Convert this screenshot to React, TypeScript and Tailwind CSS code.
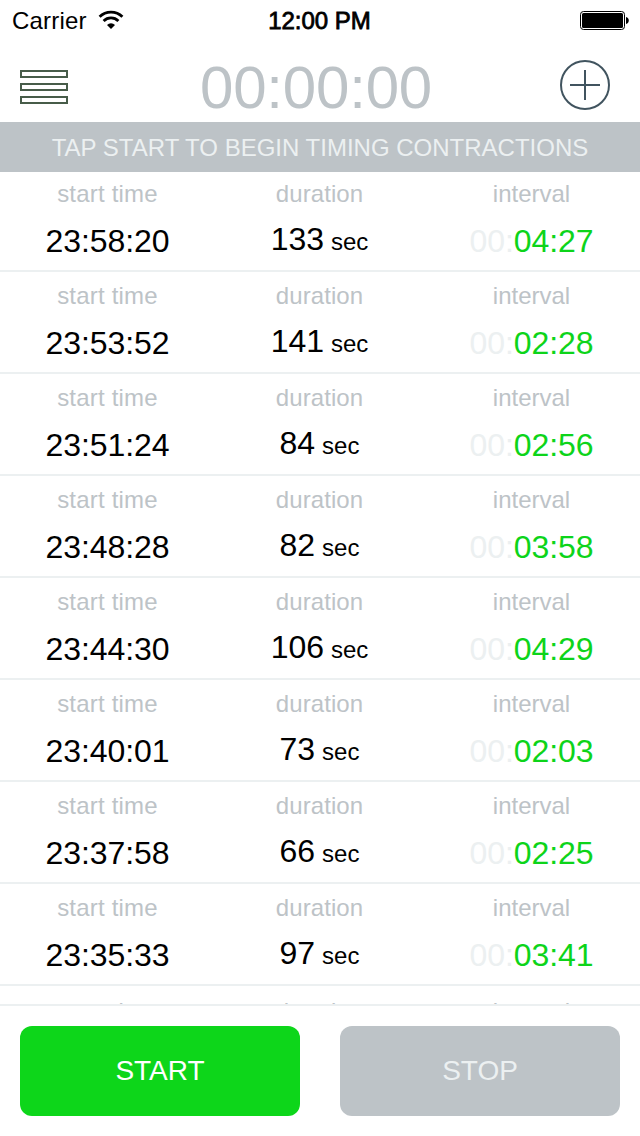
type Contraction = { start: string; duration: number; interval: string };

const contractions: Contraction[] = [
  { start: "23:58:20", duration: 133, interval: "04:27" },
  { start: "23:53:52", duration: 141, interval: "02:28" },
  { start: "23:51:24", duration: 84, interval: "02:56" },
  { start: "23:48:28", duration: 82, interval: "03:58" },
  { start: "23:44:30", duration: 106, interval: "04:29" },
  { start: "23:40:01", duration: 73, interval: "02:03" },
  { start: "23:37:58", duration: 66, interval: "02:25" },
  { start: "23:35:33", duration: 97, interval: "03:41" },
];

function StatusBar() {
  return (
    <div className="grid h-10 grid-cols-3 items-center pl-3 pr-[11px] text-[24px] leading-10 text-black">
      <div className="flex items-center gap-[11px]">
        <span className="pt-0.5 leading-[38px] tracking-[0.2px]">Carrier</span>
        <svg width="26" height="20" viewBox="0 0 26 20" fill="none">
          <path d="M1.6 6.8A16.2 16.2 0 0 1 24.4 6.8" stroke="#000" strokeWidth="2.8" />
          <path d="M5.6 11A10.5 10.5 0 0 1 20.4 11" stroke="#000" strokeWidth="2.8" />
          <path d="M13 19L9 14.9A5.8 5.8 0 0 1 17 14.9Z" fill="#000" />
        </svg>
      </div>
      <span className="pr-0.5 pt-0.5 text-center leading-[38px] [-webkit-text-stroke:0.8px_#000]">12:00 PM</span>
      <div className="flex items-center justify-end">
        <svg width="49" height="20" viewBox="0 0 49 20">
          <rect x="0.5" y="1.5" width="44" height="18" rx="3" fill="#fff" stroke="#000" />
          <rect x="2" y="3" width="41" height="15" rx="1.5" fill="#000" />
          <path d="M46 7C49.7 7.6 49.7 13.4 46 14Z" fill="#000" />
        </svg>
      </div>
    </div>
  );
}

function Header() {
  return (
    <header className="grid h-[82px] grid-cols-[48px_1fr_50px] items-start pl-5 pr-[30px]">
      <button aria-label="Menu" className="mt-[30px] flex flex-col gap-[5px]">
        <span className="h-2 border-2 border-[#475c49]" />
        <span className="h-2 border-2 border-[#475c49]" />
        <span className="h-2 border-2 border-[#475c49]" />
      </button>
      <h1 className="mt-[18px] pl-1 text-center text-[60px] leading-[60px] tracking-[-0.2px] text-[#bdc3c7]">00:00:00</h1>
      <button aria-label="Add" className="mt-5">
        <svg width="50" height="50" viewBox="0 0 50 50" fill="none" stroke="#41545f" strokeWidth="2">
          <circle cx="25" cy="25" r="24" />
          <path d="M25 10V40M10 25H40" />
        </svg>
      </button>
    </header>
  );
}

function Row({ item }: { item?: Contraction }) {
  return (
    <li
      className={
        "grid h-[102px] grid-cols-3 border-b-2 border-[#ecf0f1] pl-[1.5px] pr-[2.5px] text-center " +
        (item ? "pt-2.5" : "pt-3")
      }
    >
      <div className="flex flex-col">
        <span className="h-[46px] text-[24px] leading-[28px] tracking-[0.2px] text-[#bdc3c7]">start time</span>
        {item && <span className="text-[32px] leading-[30px] tracking-[-0.05px] text-black">{item.start}</span>}
      </div>
      <div className="flex flex-col">
        <span className="h-[44px] text-[24px] leading-[28px] tracking-[0.1px] text-[#bdc3c7]">duration</span>
        {item && (
          <span className="flex items-baseline justify-center gap-[7px] text-[32px] leading-[30px] text-black">
            {item.duration}
            <span className="text-[24px]">sec</span>
          </span>
        )}
      </div>
      <div className="flex flex-col">
        <span className="h-[46px] text-[24px] leading-[28px] text-[#bdc3c7]">interval</span>
        {item && (
          <span className="text-[32px] leading-[30px] tracking-[-0.05px] text-[#0dd41a]">
            <span className="text-[#ecf0f1]">00:</span>
            {item.interval}
          </span>
        )}
      </div>
    </li>
  );
}

export default function App() {
  return (
    <main className="flex h-[1136px] w-[640px] flex-col overflow-hidden bg-white font-['Liberation_Sans',Arial,sans-serif]">
      <StatusBar />
      <Header />
      <p className="h-[50px] bg-[#bdc3c7] pt-0.5 text-center text-[24px] leading-[48px] text-[#ecf0f1]">
        TAP START TO BEGIN TIMING CONTRACTIONS
      </p>
      <div className="h-[832px] overflow-hidden">
        <ul className="-mt-0.5">
          {contractions.map((item) => (
            <Row key={item.start} item={item} />
          ))}
          <Row />
        </ul>
      </div>
      <footer className="grid h-[132px] grid-cols-2 gap-10 border-t-2 border-[#ecf0f1] p-5">
        <button className="h-[90px] rounded-xl bg-[#0dd61a] text-[28px] text-white">START</button>
        <button className="h-[90px] rounded-xl bg-[#bdc3c7] text-[28px] text-[#ecf0f1]">STOP</button>
      </footer>
    </main>
  );
}
